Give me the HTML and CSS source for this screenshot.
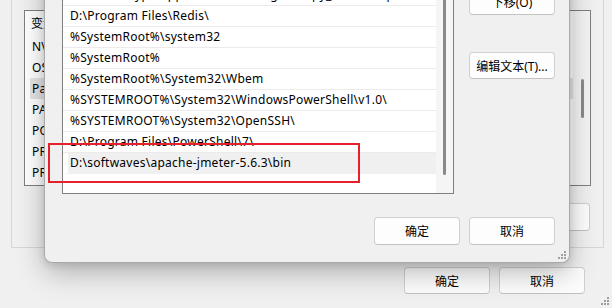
FILE: index.html
```html
<!DOCTYPE html>
<html lang="zh-CN">
<head>
<meta charset="utf-8">
<title>编辑环境变量</title>
<link rel="stylesheet" href="styles.css">
</head>
<body>
<div class="desk">
  <div class="win back">
    <div class="group">
      <div class="blist">
        <div class="bcontent">
          <div class="bhead"><span class="c1">变量</span><span>值</span></div>
          <div class="brow"><span class="c1">NVM</span></div>
          <div class="brow"><span class="c1">OS</span></div>
          <div class="brow sel"><span class="c1">Path</span></div>
          <div class="brow"><span class="c1">PATH</span></div>
          <div class="brow"><span class="c1">POW</span></div>
          <div class="brow"><span class="c1">PRO</span></div>
          <div class="brow"><span class="c1">PRO</span></div>
        </div>
        <div class="bstrip"><div class="bthumb"></div></div>
      </div>
      <div class="gbtns">
        <button class="btn">删除(L)</button>
      </div>
    </div>
    <div class="foot back-foot">
      <button class="btn">确定</button>
      <button class="btn">取消</button>
    </div>
    <svg class="grip" width="10" height="10" viewBox="0 0 10 10"><rect x="8" y="2" width="2" height="2"/><rect x="5" y="5" width="2" height="2"/><rect x="8" y="5" width="2" height="2"/><rect x="2" y="8" width="2" height="2"/><rect x="5" y="8" width="2" height="2"/><rect x="8" y="8" width="2" height="2"/></svg>
  </div>

  <div class="win front">
    <div class="main">
      <div class="plist">
        <div class="rows">
          <div class="row">C:\Program Files\Common Files\Oracle\Java\javapath</div>
          <div class="row">%SystemRoot%\system32</div>
          <div class="row">%SystemRoot%</div>
          <div class="row">%SystemRoot%\System32\Wbem</div>
          <div class="row">%JAVA_HOME%\bin</div>
          <div class="row">%JAVA_HOME%\jre\bin</div>
          <div class="row">D:\softwaves\Git\cmd</div>
          <div class="row">D:\softwaves\nodejs\</div>
          <div class="row">%MAVEN_HOME%\bin</div>
          <div class="row">C:\Users\Mypc\AppData\Local\Programs\py_tools\Scripts\</div>
          <div class="row">D:\Program Files\Redis\</div>
          <div class="row">%SystemRoot%\system32</div>
          <div class="row">%SystemRoot%</div>
          <div class="row">%SystemRoot%\System32\Wbem</div>
          <div class="row">%SYSTEMROOT%\System32\WindowsPowerShell\v1.0\</div>
          <div class="row">%SYSTEMROOT%\System32\OpenSSH\</div>
          <div class="row">D:\Program Files\PowerShell\7\</div>
          <div class="row sel">D:\softwaves\apache-jmeter-5.6.3\bin</div>
        </div>
        <div class="strip"><div class="thumb"></div></div>
      </div>
      <div class="side">
        <button class="btn">新建(N)</button>
        <button class="btn">编辑(E)</button>
        <button class="btn">浏览(B)...</button>
        <button class="btn">删除(D)</button>
        <button class="btn up">上移(U)</button>
        <button class="btn">下移(O)</button>
        <button class="btn edit">编辑文本(T)...</button>
      </div>
    </div>
    <div class="foot">
      <button class="btn">确定</button>
      <button class="btn">取消</button>
    </div>
    <svg class="grip" width="10" height="10" viewBox="0 0 10 10"><rect x="8" y="2" width="2" height="2"/><rect x="5" y="5" width="2" height="2"/><rect x="8" y="5" width="2" height="2"/><rect x="2" y="8" width="2" height="2"/><rect x="5" y="8" width="2" height="2"/><rect x="8" y="8" width="2" height="2"/></svg>
  </div>

  <div class="mark"></div>
</div>
</body>
</html>
```

FILE: styles.css
```css
* { box-sizing: border-box; }
html, body { margin: 0; padding: 0; }
body {
  width: 612px;
  height: 308px;
  overflow: hidden;
  background: #f0f0f0;
  font-family: "Noto Sans", "Noto Sans CJK SC", sans-serif;
  font-size: 12px;
  color: #000;
}
.desk { position: relative; width: 612px; height: 308px; overflow: hidden; }

.win { position: absolute; background: #f0f0f0; display: flex; flex-direction: column; }

/* back window */
.back {
  left: 0; top: -60px; width: 612px; height: 368px;
  padding: 20px 8px 14px 11px;
}
.group {
  border: 1px solid #d6d6d6;
  padding: 49px 12px 16px 12px;
  display: flex; flex-direction: column; gap: 17px;
}
.blist {
  height: 176px;
  border: 1px solid #7f7f7f;
  background: #fff;
  display: flex;
}
.bcontent { flex: 1; overflow: hidden; }
.bhead { height: 25px; line-height: 25px; padding-left: 6px; display: flex; white-space: nowrap; }
.brow { height: 21px; line-height: 21px; margin-left: 5px; padding-left: 2px; display: flex; white-space: nowrap; letter-spacing: 0.25px; }
.brow.sel { background: #e5e5e5; }
.c1 { width: 240px; flex: none; }
.bstrip { width: 17px; flex: none; background: #f4f4f4; display: flex; justify-content: center; padding-top: 68px; }
.bthumb { width: 3px; height: 39px; background: #8a8a8a; border-radius: 2px; margin-left: 2px; }
.gbtns { display: flex; justify-content: flex-end; gap: 9px; padding-right: 1px; }
.gbtns .btn { height: 28px; }

.foot { display: flex; justify-content: flex-end; gap: 9px; }
.back-foot { margin-top: 19px; padding-right: 19px; }
.back-foot .btn { height: 27px; }

.btn {
  width: 86px; height: 27px; flex: none;
  font: inherit; color: #000;
  background: #fdfdfd;
  border: 1px solid #d0d0d0;
  border-bottom-color: #c2c2c2;
  border-radius: 4px;
  padding: 0;
  text-align: center;
}

/* front window */
.front {
  left: 44px; top: -245px; width: 526px; height: 508px;
  border: 1px solid #a9a9a9;
  border-top: none;
  border-radius: 0 0 8px 8px;
  padding: 40px 14px 17px 17px;
  box-shadow: 0 10px 28px rgba(0,0,0,0.26), 0 2px 8px rgba(0,0,0,0.12);
  gap: 23px;
}
.main { display: flex; gap: 15px; }
.plist {
  width: 392px; height: 399px;
  border: 1px solid #7f7f7f;
  background: #fff;
  display: flex;
}
.rows { flex: 1; overflow: hidden; }
.row {
  height: 21px; line-height: 20px;
  padding-left: 7px;
  border-bottom: 1px solid #ebebeb;
  white-space: nowrap;
  letter-spacing: 0.25px;
}
.row.sel { background: #f0f0f0; border-bottom-color: #f0f0f0; border-left: 5px solid #fff; padding-left: 2px; }
.strip { width: 17px; flex: none; background: #f5f5f5; display: flex; flex-direction: column; justify-content: flex-end; padding-bottom: 18px; }
.thumb { width: 3px; height: 260px; background: #8a8a8a; border-radius: 2px; margin-left: 7px; }

.side { width: 86px; display: flex; flex-direction: column; gap: 8px; }
.side .up { margin-top: 18px; }
.side .edit { margin-top: 29px; }

.front .foot .btn { height: 28px; }

.grip { position: absolute; right: 3px; bottom: 3px; fill: #a0a0a0; }

.mark {
  position: absolute; left: 48px; top: 143px; width: 312px; height: 40px;
  border: 2px solid #e5222b;
}
```
